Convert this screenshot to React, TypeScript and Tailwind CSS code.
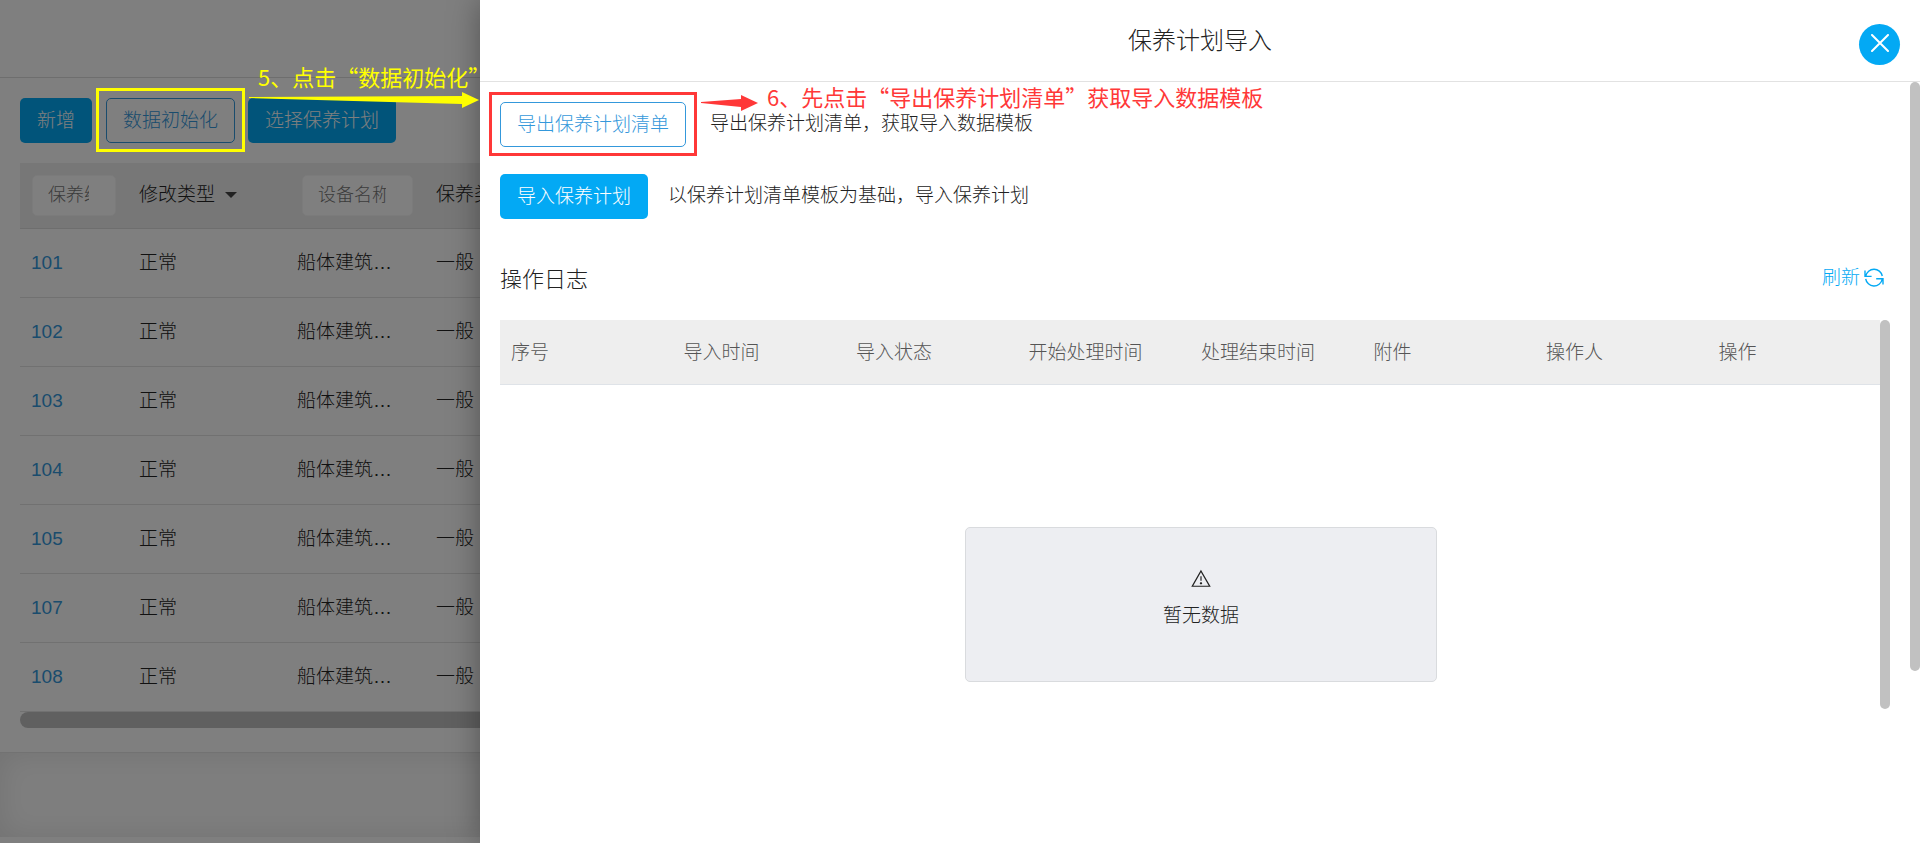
import { useState } from "react";
import { TfiAlert } from "react-icons/tfi";

interface PlanRow {
  code: string;
  changeType: string;
  device: string;
  kind: string;
}

const plans: PlanRow[] = ["101", "102", "103", "104", "105", "107", "108"].map(
  (code) => ({
    code,
    changeType: "正常",
    device: "船体建筑…",
    kind: "一般",
  }),
);

const logColumns = [
  "序号",
  "导入时间",
  "导入状态",
  "开始处理时间",
  "处理结束时间",
  "附件",
  "操作人",
  "操作",
];

const solidButton =
  "h-[45px] shrink-0 rounded-[5px] bg-[#03a9f4] px-[17px] whitespace-nowrap text-white";
const outlineButton =
  "h-[45px] shrink-0 rounded-[5px] border border-[#3498db] px-4 whitespace-nowrap text-[#3498db]";
const filterInput =
  "block h-[41px] rounded-[5px] border border-[#f6f6f6] bg-white pr-6.5 pl-[15px] text-[18px] placeholder:text-[#777]";

export default function App() {
  const [open, setOpen] = useState(true);

  return (
    <div
      lang="zh-CN"
      className="relative h-screen overflow-hidden bg-white font-['Liberation_Sans','Noto_Sans_CJK_SC',sans-serif] text-[19px] leading-7 font-light text-[#222]"
    >
      <PlanPage />
      {open && (
        <>
          <div className="absolute inset-0 bg-black/50" />
          <ImportDrawer close={() => setOpen(false)} />
          <Guide />
        </>
      )}
    </div>
  );
}

function PlanPage() {
  return (
    <div className="flex h-full flex-col">
      <header className="h-[78px] shrink-0 border-b border-[#ddd]" />

      <main className="flex flex-col border-b border-[#e4e4e4] pb-6 pl-5">
        <div className="flex pt-5">
          <button className={solidButton}>新增</button>
          <button className={`${outlineButton} ml-3.5`}>数据初始化</button>
          <button className={`${solidButton} ml-[13px]`}>选择保养计划</button>
        </div>

        <table className="mt-5 w-full table-fixed border-collapse text-left">
          <thead>
            <tr className="h-[65px] border-b border-[#ddd] bg-[#eee]">
              <th className="w-[108px] pl-3 font-light">
                <input
                  aria-label="保养编号"
                  placeholder="保养编号"
                  className={`${filterInput} w-[84px]`}
                />
              </th>
              <th className="w-[158px] pl-[11px] font-light">
                <button className="flex items-center gap-2.5">
                  修改类型
                  <span className="border-x-6 border-t-6 border-x-transparent border-t-[#444]" />
                </button>
              </th>
              <th className="w-[139px] pl-4 font-light">
                <input
                  aria-label="设备名称"
                  placeholder="设备名称"
                  className={`${filterInput} w-[111px]`}
                />
              </th>
              <th className="pl-[11px] font-light">保养类型</th>
            </tr>
          </thead>
          <tbody>
            {plans.map((plan) => (
              <tr key={plan.code} className="h-[69px] border-b border-[#e2e2e2]">
                <td className="pl-[11px]">
                  <a href="#" className="font-normal text-[#3498db]">
                    {plan.code}
                  </a>
                </td>
                <td className="pl-[11px]">{plan.changeType}</td>
                <td className="pl-[11px] whitespace-nowrap">{plan.device}</td>
                <td className="pl-[11px]">{plan.kind}</td>
              </tr>
            ))}
          </tbody>
        </table>

        {/* horizontal scrollbar */}
        <div className="h-4 rounded-full bg-[#c1c1c1]" />
      </main>

      <div className="flex-1 bg-[#fdfdfd] shadow-[inset_0_0_30px_rgba(0,0,0,0.1)]" />
      <footer className="h-1.5 shrink-0 bg-white" />
    </div>
  );
}

function ImportDrawer({ close }: { close: () => void }) {
  return (
    <section
      role="dialog"
      aria-label="保养计划导入"
      className="absolute inset-y-0 right-0 flex w-3/4 flex-col bg-white shadow-[0_0_30px_rgba(0,0,0,0.35)]"
    >
      <header className="relative h-[82px] shrink-0 border-b border-[#e2e2e2] text-center">
        <h2 className="pt-[23px] text-2xl leading-9 font-light">
          保养计划导入
        </h2>
        <button
          aria-label="关闭"
          onClick={close}
          className="absolute top-6 right-5 flex size-[41px] justify-center rounded-full bg-[#03a9f4] pt-2.5"
        >
          <svg
            viewBox="0 0 18 18"
            className="size-[18px] fill-none stroke-white stroke-2"
          >
            <path d="M1 1L17 17M17 1L1 17" strokeLinecap="round" />
          </svg>
        </button>
      </header>

      <div className="flex flex-1 items-start justify-between">
        <div className="flex-1 pt-5 pr-5 pl-5">
          <div className="flex">
            <button className={outlineButton}>导出保养计划清单</button>
            <p className="pt-2 pl-6">导出保养计划清单，获取导入数据模板</p>
          </div>
          <div className="mt-[27px] flex">
            <button className={solidButton}>导入保养计划</button>
            <p className="pt-2 pl-5">以保养计划清单模板为基础，导入保养计划</p>
          </div>

          <div className="mt-[39px] flex justify-between pr-1.5">
            <h3 className="pt-1 text-[22px] leading-9 font-light">操作日志</h3>
            <button className="flex h-10 items-center gap-1 text-[#03a9f4]">
              刷新
              <RefreshIcon />
            </button>
          </div>

          <div className="mt-[22px] flex">
            <div className="flex-1">
              <table className="w-full table-fixed border-collapse text-left">
                <thead>
                  <tr className="h-16 border-b border-[#dfe3e8] bg-[#eee] text-[#555]">
                    {logColumns.map((label) => (
                      <th key={label} className="pt-0.5 pl-[11px] font-light">
                        {label}
                      </th>
                    ))}
                  </tr>
                </thead>
              </table>
            </div>
            {/* vertical scrollbar of the log */}
            <div className="-mb-[325px] h-[389px] w-2.5 rounded-full bg-[#c1c1c1]" />
          </div>

          <div className="-mr-3 flex justify-center pt-[142px]">
            <div className="flex h-[155px] w-[472px] flex-col items-center rounded-[5px] border border-[#d9dbde] bg-[#edeef2] pt-10">
              <TfiAlert className="size-5" />
              <p className="pt-3.5">暂无数据</p>
            </div>
          </div>
        </div>

        {/* vertical scrollbar of the drawer */}
        <div className="h-[589px] w-2.5 rounded-full bg-[#c1c1c1]" />
      </div>
    </section>
  );
}

function RefreshIcon() {
  return (
    <svg
      viewBox="0 0 20 20"
      className="size-5 fill-none stroke-current"
      strokeWidth="1.4"
    >
      <path d="M1 2.5V8.4H7.6M1.8 8.2A8.4 8.4 0 0 1 18.3 8" />
      <path d="M12.2 10.7H19V16.6M1.7 10.8A8.4 8.4 0 0 0 18.2 11.4" />
    </svg>
  );
}

// step hints drawn over the page
function Guide() {
  return (
    <div className="pointer-events-none absolute inset-0 text-[22px] leading-8 font-normal whitespace-nowrap font-['Noto_Sans_CJK_SC',sans-serif]">
      <div className="absolute top-[88px] left-24 h-16 w-[149px] border-3 border-[#ff0]" />
      <svg
        viewBox="0 0 230 16"
        className="absolute top-[92px] left-[249px] h-4 w-[230px] fill-[#ff0]"
      >
        <path d="M0 5L213 4V0L230 8L213 16V12L0 6Z" />
      </svg>
      <p className="absolute top-[60px] left-[258px] text-[#ff0]">
        5、点击“数据初始化”
      </p>

      <div className="absolute top-[92px] left-[489px] h-16 w-52 border-3 border-[#ff3838]" />
      <svg
        viewBox="0 0 57 16"
        className="absolute top-[95px] left-[701px] h-4 w-[57px] fill-[#ff3838]"
      >
        <path d="M0 7L40 4V0L57 8L40 16V12L0 8Z" />
      </svg>
      <p className="absolute top-20 left-[767px] text-[#ff3838]">
        6、先点击“导出保养计划清单”获取导入数据模板
      </p>
    </div>
  );
}
